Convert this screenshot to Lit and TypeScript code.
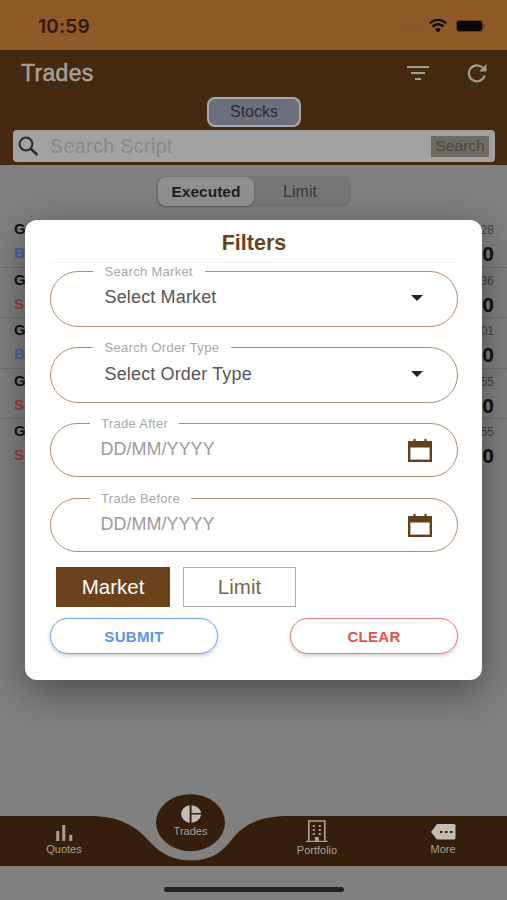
import { LitElement, html, css } from "lit";
import { customElement } from "lit/decorators.js";

const rows = [
  { side: "B", color: "#3f66a8", time: "28" },
  { side: "S", color: "#a03c3c", time: "36" },
  { side: "B", color: "#3f66a8", time: "01" },
  { side: "S", color: "#a03c3c", time: "55" },
  { side: "S", color: "#a03c3c", time: "55" },
];

const calendar = html`<svg class="cal" width="26" height="26" viewBox="0 0 26 26" fill="none">
  <rect x="2.2" y="4.2" width="21.6" height="18.6" stroke="#62401c" stroke-width="2.4"/>
  <rect x="2" y="4" width="22" height="5.5" fill="#62401c"/>
  <rect x="6.4" y="1" width="2.2" height="4" fill="#62401c"/>
  <rect x="17.4" y="1" width="2.2" height="4" fill="#62401c"/>
</svg>`;

const caret = html`<svg class="caret" width="12" height="6" viewBox="0 0 12 6"><path d="M0 0H12L6 6Z" fill="#222"/></svg>`;

@customElement("app-root")
export class AppRoot extends LitElement {
  static styles = css`
    :host { display: block; width: 507px; height: 900px; position: relative; overflow: hidden;
      font-family: "Liberation Sans", Arial, sans-serif; background: #808080; }
    .page { display: flex; flex-direction: column; height: 900px; }
    .status { height: 50px; flex: none; background: #8f5827; display: flex; align-items: center;
      justify-content: space-between; padding: 2px 21px 0 38px; box-sizing: border-box; }
    .time { font: 600 19px Inter, sans-serif; color: #2a1a0a; letter-spacing: 0.2px; }
    .sys { display: flex; align-items: center; gap: 9px; }
    .dots { display: flex; gap: 3px; margin-right: -3px; margin-top: 4px; }
    .dots i { width: 3.500px; height: 3.500px; border-radius: 50%; background: #7c5a38; display: block; }
    .head { height: 115px; flex: none; background: #462911; box-sizing: border-box; padding: 0 12px 0 13px;
      display: flex; flex-direction: column; }
    .toprow { height: 46px; margin-bottom: 1px; flex: none; display: flex; align-items: center; padding: 0 7px 0 8px; }
    .title { flex: 1; font-size: 23px; letter-spacing: 0.3px; color: #a5a19a; -webkit-text-stroke: 0.5px #a5a19a; }
    .icons { display: flex; align-items: center; gap: 36px; }
    .stocksrow { display: flex; justify-content: center; height: 33px; flex: none; }
    .stocks { width: 94px; height: 30px; box-sizing: border-box; border: 2px solid #a9a9a9; border-radius: 8px;
      background: #6e6f7e; color: #2b2b33; font-size: 16px; display: flex; align-items: center; justify-content: center; }
    .search { height: 32px; flex: none; background: #a2a2a2; border-radius: 4px; display: flex; align-items: center;
      padding: 0 6px 0 4px; }
    .search svg { flex: none; }
    .ph { flex: 1; margin-left: 11px; font-size: 19.5px; color: #898989; letter-spacing: 0.45px; }
    .sbtn { width: 58px; height: 21px; background: #6d6b64; color: #4a4840; font-size: 15.5px; display: flex;
      align-items: center; justify-content: center; }
    .body { flex: 1; background: #808080; min-height: 0; display: flex; flex-direction: column; }
    .segwrap { display: flex; justify-content: center; padding-top: 11px; height: 42px; flex: none; }
    .seg { width: 195px; height: 31px; background: #767676; border-radius: 8px; display: flex; }
    .seg div { display: flex; align-items: center; justify-content: center; }
    .seg .on { width: 96px; background: #909090; border-radius: 8px; color: #1e1e1e; box-shadow: 0 1px 2px #555;
      font-size: 15.5px; font-weight: 700; margin: 1px 0 1px 2px; }
    .seg .off { width: 92px; color: #3a3a3a; font-size: 16px; }
    .list { margin-top: -1px; }
    .row { height: 50.5px; box-sizing: border-box; border-bottom: 1px solid #707070; padding: 0 13px 0 14px; display: flex;
      justify-content: space-between; flex: none; }
    .row:last-child { border-bottom: none; }
    .c { display: flex; flex-direction: column; gap: 6px; padding-top: 3px; font-weight: 700; font-size: 15px; line-height: 18px; }
    .c.r { align-items: flex-end; gap: 5px; padding-top: 6px; }
    .c.r small { font-size: 12px; font-weight: 400; color: #444; line-height: 14px; }
    .c.r b { font-size: 21px; line-height: 24px; color: #111; }
    .g { color: #111; }
    .tabs { height: 51px; flex: none; position: relative; display: flex; }
    .tabs > svg { position: absolute; left: 0; top: -22px; }
    .tab { position: absolute; display: flex; flex-direction: column; align-items: center; color: #a8a199; font-size: 11px; gap: 2px; transform: translateX(-50%); }
    .homewrap { height: 34px; flex: none; background: #808080; display: flex; justify-content: center; }
    .home { width: 180px; height: 5px; margin-top: 21px; border-radius: 3px; background: #222; }
    .overlay { position: absolute; left: 25px; top: 220px; width: 457px; height: 460px; background: #fff; border-radius: 12px;
      box-shadow: 0 12px 40px rgba(0,0,0,0.42); box-sizing: border-box; padding: 0 24px 0 25px; display: flex; flex-direction: column; }
    h2 { height: 43px; flex: none; display: flex; align-items: center; justify-content: center; font-size: 21.5px; color: #6a431c;
      font-weight: 700; border-bottom: 1px solid #f3f3f3; box-sizing: border-box; margin: 0 2px; padding-top: 5px; }
    fieldset { display: block; margin: 0; padding: 0; border: 1.5px solid #b08d68; border-radius: 28px; min-width: 0; box-sizing: border-box; }
    legend { font-size: 13px; letter-spacing: 0.3px; color: #a8a8a8; line-height: 14px; height: 12px; white-space: nowrap; }
    .in { display: flex; align-items: center; }
    .v { flex: 1; }
    .sel { height: 62px; }
    .sel legend { margin-left: 41.5px; padding: 0 12px; }
    .sel .in { height: 41px; padding: 0 34px 0 53.5px; }
    .sel .v { font-size: 18px; letter-spacing: 0.15px; color: #555; }
    .sel .caret { margin-top: 1px; }
    .second .v { padding-top: 2px; }
    .first { margin-top: 2px; }
    .second { margin-top: 14px; }
    .date { height: 60px; }
    .date legend { margin-left: 39px; padding: 0 11px; }
    .date .in { height: 40px; padding: 0 24.5px 0 49.5px; }
    .date .v { color: #9b9b9b; font-size: 18px; }
    .cal { margin-top: 3px; }
    .a { margin-top: 14px; }
    .b { margin-top: 15px; }
    .toggle { display: flex; gap: 13px; padding: 0 0 0 6px; margin-top: 15px; }
    .toggle div { height: 40px; box-sizing: border-box; display: flex; align-items: center; justify-content: center; font-size: 20.5px; }
    .mk { width: 114px; background: #6a431c; color: #fff; }
    .lm { width: 113px; border: 1px solid #b0b0b0; color: #7b6446; }
    .acts { display: flex; justify-content: space-between; margin-top: 11px; }
    .acts div { width: 168px; height: 36px; border-radius: 18px; box-sizing: border-box; display: flex; align-items: center; justify-content: center;
      font-size: 15px; letter-spacing: 0.3px; font-weight: 700; background: #fff; box-shadow: 0 2px 4px rgba(0,0,0,0.18); }
    .sub { border: 1.5px solid #6da3ec; color: #5a93ee; }
    .clr { border: 1.5px solid #e57a78; color: #e8504c; }
  `;

  render() {
    return html`
      <div class="page">
        <div class="status">
          <span class="time">10:59</span>
          <div class="sys">
            <span class="dots"><i></i><i></i><i></i><i></i></span>
            <svg width="18" height="14" viewBox="0 0 18 14"><path d="M9 13.5 L6.2 10.4 A4 4 0 0 1 11.8 10.4Z M4.4 8.5 L2.7 6.6 A9 9 0 0 1 15.3 6.6 L13.6 8.5 A6.5 6.5 0 0 0 4.4 8.5Z M1.5 5.3 L0 3.6 A12.6 12.6 0 0 1 18 3.6 L16.5 5.3 A10.3 10.3 0 0 0 1.5 5.3Z" fill="#0d0703"/></svg>
            <svg width="30" height="14" viewBox="0 0 30 14"><rect x="0.5" y="1.5" width="26" height="11" rx="3" fill="#0d0703" stroke="#5c3a18"/><rect x="27.5" y="5" width="1.5" height="4" fill="#5c3a18"/></svg>
          </div>
        </div>
        <div class="head">
          <div class="toprow">
            <span class="title">Trades</span>
            <div class="icons">
              <svg width="24" height="16" viewBox="0 0 24 16"><path d="M1 2H23M5 8H19M9 14H15" stroke="#a09c96" stroke-width="2"/></svg>
              <svg width="22" height="20" viewBox="0 0 22 20" fill="none"><path d="M18.6 12.5A8 8 0 1 1 16.5 4.6" stroke="#a09c96" stroke-width="2.2"/><path d="M20.5 1V8.5H13Z" fill="#a09c96"/></svg>
            </div>
          </div>
          <div class="stocksrow"><div class="stocks">Stocks</div></div>
          <div class="search">
            <svg width="22" height="22" viewBox="0 0 22 22" fill="none"><circle cx="9" cy="9" r="6.4" stroke="#2a2a2a" stroke-width="2"/><path d="M13.5 13.5L20.5 20" stroke="#2a2a2a" stroke-width="2.4"/></svg>
            <span class="ph">Search Script</span>
            <span class="sbtn">Search</span>
          </div>
        </div>
        <div class="body">
          <div class="segwrap"><div class="seg"><div class="on">Executed</div><div class="off">Limit</div></div></div>
          <div class="list">
            ${rows.map(
              (r) => html`<div class="row">
                <div class="c"><span class="g">G</span><span style="color:${r.color}">${r.side}</span></div>
                <div class="c r"><small>${r.time}</small><b>0</b></div>
              </div>`
            )}
          </div>
        </div>
        <div class="tabs">
          <svg width="507" height="73" viewBox="0 0 507 73">
            <path d="M0 23H90C118 23 135 32 150 49C162 62 175 67.500 192 67.500C210 67.500 222 60 233 45C245 30 262 23 290 23H507V73H0Z" fill="#351e0b"/>
            <ellipse cx="190.500" cy="29.700" rx="34.500" ry="28.500" fill="#351e0b"/>
          </svg>
          <div class="tab" style="left:64px;top:8px">
            <svg width="18" height="18" viewBox="0 0 18 18"><path d="M1 8h3v10H1zM7 2h3v16H7zM14 12h3v6h-3z" fill="#a8a199"/></svg>
            <span>Quotes</span>
          </div>
          <div class="tab" style="left:190.500px;top:-10px">
            <svg width="21" height="18" viewBox="0 0 22 22" preserveAspectRatio="none"><path d="M10 .2V21.8A11 11 0 0 1 10 .2ZM12 .2A11 11 0 0 1 22 9.7H12ZM12 11.7H22A11 11 0 0 1 12 21.8Z" fill="#c4bdb4"/></svg>
            <span>Trades</span>
          </div>
          <div class="tab" style="left:317px;top:5px">
            <svg width="22" height="22" viewBox="0 0 22 22" fill="none"><path d="M3 21V1H19V21M0 21.5H22" stroke="#a8a199" stroke-width="1.6"/><path d="M7 5h2v2H7zM13 5h2v2h-2zM7 9h2v2H7zM13 9h2v2h-2zM7 13h2v2H7zM13 13h2v2h-2zM9 17h4v4H9z" fill="#a8a199"/></svg>
            <span>Portfolio</span>
          </div>
          <div class="tab" style="left:443px;top:8px">
            <svg width="26" height="18" viewBox="0 0 26 18"><path d="M7 1H24a1.5 1.5 0 0 1 1.5 1.5V15A1.5 1.5 0 0 1 24 16.500H7L1 9Z" fill="#c4bdb4"/><path d="M10 8h2.500v2H10zM15 8h2.500v2H15zM20 8h2.500v2H20z" fill="#351e0b"/></svg>
            <span>More</span>
          </div>
        </div>
        <div class="homewrap"><div class="home"></div></div>
      </div>
      <div class="overlay">
        <h2>Filters</h2>
        <fieldset class="sel first"><legend>Search Market</legend><div class="in"><span class="v">Select Market</span>${caret}</div></fieldset>
        <fieldset class="sel second"><legend>Search Order Type</legend><div class="in"><span class="v">Select Order Type</span>${caret}</div></fieldset>
        <fieldset class="date a"><legend>Trade After</legend><div class="in"><span class="v">DD/MM/YYYY</span>${calendar}</div></fieldset>
        <fieldset class="date b"><legend>Trade Before</legend><div class="in"><span class="v">DD/MM/YYYY</span>${calendar}</div></fieldset>
        <div class="toggle"><div class="mk">Market</div><div class="lm">Limit</div></div>
        <div class="acts"><div class="sub">SUBMIT</div><div class="clr">CLEAR</div></div>
      </div>
    `;
  }
}
